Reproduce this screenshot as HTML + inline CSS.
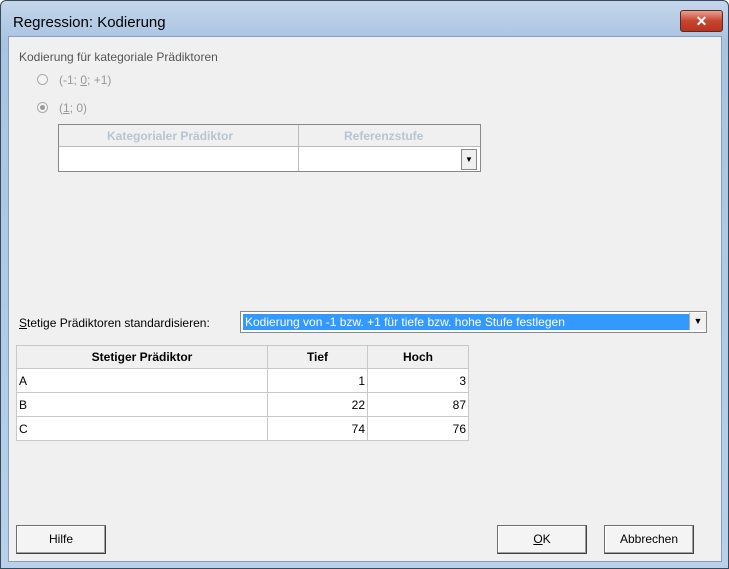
<!DOCTYPE html>
<html><head><style>
body{margin:0;width:729px;height:569px;overflow:hidden;font-family:"Liberation Sans",sans-serif;font-size:12px;}
.win{position:absolute;left:0;top:0;width:727px;height:567px;border:1px solid #3a4a5a;border-radius:6px 6px 0 0;background:linear-gradient(#c4d6ea,#a9c4e2 40px,#b8d0ea);}
.cont{position:absolute;left:8px;top:36px;width:712px;height:524px;background:#f0f0f0;border:1px solid #8aa0b8;}
.a{position:absolute;}
.t{position:absolute;white-space:nowrap;}
.btn{position:absolute;width:88px;height:27px;border:1px solid #707070;border-right-color:#404040;border-bottom-color:#404040;background:#f4f4f4;text-align:center;line-height:27px;box-shadow:inset -1px -1px 0 #a0a0a0,inset 1px 1px 0 #fff;}
table{border-collapse:collapse;position:absolute;background:#fff;font-size:12px;table-layout:fixed;}
td{border:1px solid #c8c8c8;padding:0 2px;height:23px;box-sizing:border-box;}
th{border:1px solid #c8c8c8;background:#f0f0f0;font-weight:bold;height:23px;box-sizing:border-box;}
.r{text-align:right;}
</style></head><body>
<div class="win">
<div class="t" style="left:12px;top:13px;font-size:15px;color:#000">Regression: Kodierung</div>
<div class="a" style="left:679px;top:9px;width:41px;height:20px;border:1px solid #5a2a20;border-radius:3px;background:linear-gradient(#e8a090,#c8442e 50%,#b83420);color:#fff;font-weight:bold;text-align:center;line-height:20px;font-size:14px">✕</div>
</div>
<div class="cont"></div>
<div class="t" style="left:19px;top:50px;color:#555">Kodierung für kategoriale Prädiktoren</div>
<div class="a" style="left:37px;top:74px;width:9px;height:9px;border:1px solid #aaa;border-radius:50%;background:#f4f4f4"></div>
<div class="t" style="left:59px;top:73px;color:#999">(-1; <u>0</u>; +1)</div>
<div class="a" style="left:37px;top:102px;width:9px;height:9px;border:1px solid #aaa;border-radius:50%;background:#f4f4f4"><div style="margin:2px;width:5px;height:5px;border-radius:50%;background:#999"></div></div>
<div class="t" style="left:59px;top:101px;color:#999">(<u>1</u>; 0)</div>
<div class="a" style="left:58px;top:124px;width:421px;height:46px;border:1px solid #888;background:#fff">
<div class="a" style="left:0;top:0;width:421px;height:21px;background:#f0f0f0;border-bottom:1px solid #bbb"></div>
<div class="a" style="left:239px;top:0;width:1px;height:46px;background:#bbb"></div>
<div class="t" style="left:48px;top:4px;color:#b8c4d0;font-weight:bold">Kategorialer Prädiktor</div>
<div class="t" style="left:285px;top:4px;color:#b8c4d0;font-weight:bold">Referenzstufe</div>
<div class="a" style="left:402px;top:24px;width:14px;height:19px;background:#f0f0f0;border:1px solid #888;font-size:8px;text-align:center;line-height:19px">▼</div>
</div>
<div class="t" style="left:19px;top:316px"><u>S</u>tetige Prädiktoren standardisieren:</div>
<div class="a" style="left:240px;top:311px;width:465px;height:20px;border:1px solid #888;background:#fff">
<div class="a" style="left:2px;top:2px;width:444px;height:16px;background:#3399ff;color:#fff;line-height:16px;padding-left:2px">Kodierung von -1 bzw. +1 für tiefe bzw. hohe Stufe festlegen</div>
<div class="a" style="left:448px;top:1px;width:16px;height:17px;background:#f0f0f0;border-left:1px solid #aaa;font-size:9px;text-align:center;line-height:17px">▼</div>
</div>
<table style="left:16px;top:345px;width:452px;border:1px solid #888">
<colgroup><col style="width:251px"><col style="width:100px"><col style="width:101px"></colgroup>
<tr><th>Stetiger Prädiktor</th><th>Tief</th><th>Hoch</th></tr>
<tr><td style="height:24px">A</td><td class="r">1</td><td class="r">3</td></tr>
<tr><td style="height:24px">B</td><td class="r">22</td><td class="r">87</td></tr>
<tr><td style="height:24px">C</td><td class="r">74</td><td class="r">76</td></tr>
</table>
<div class="btn" style="left:16px;top:525px">Hilfe</div>
<div class="btn" style="left:497px;top:525px"><u>O</u>K</div>
<div class="btn" style="left:604px;top:525px">Abbrechen</div>
</body></html>
